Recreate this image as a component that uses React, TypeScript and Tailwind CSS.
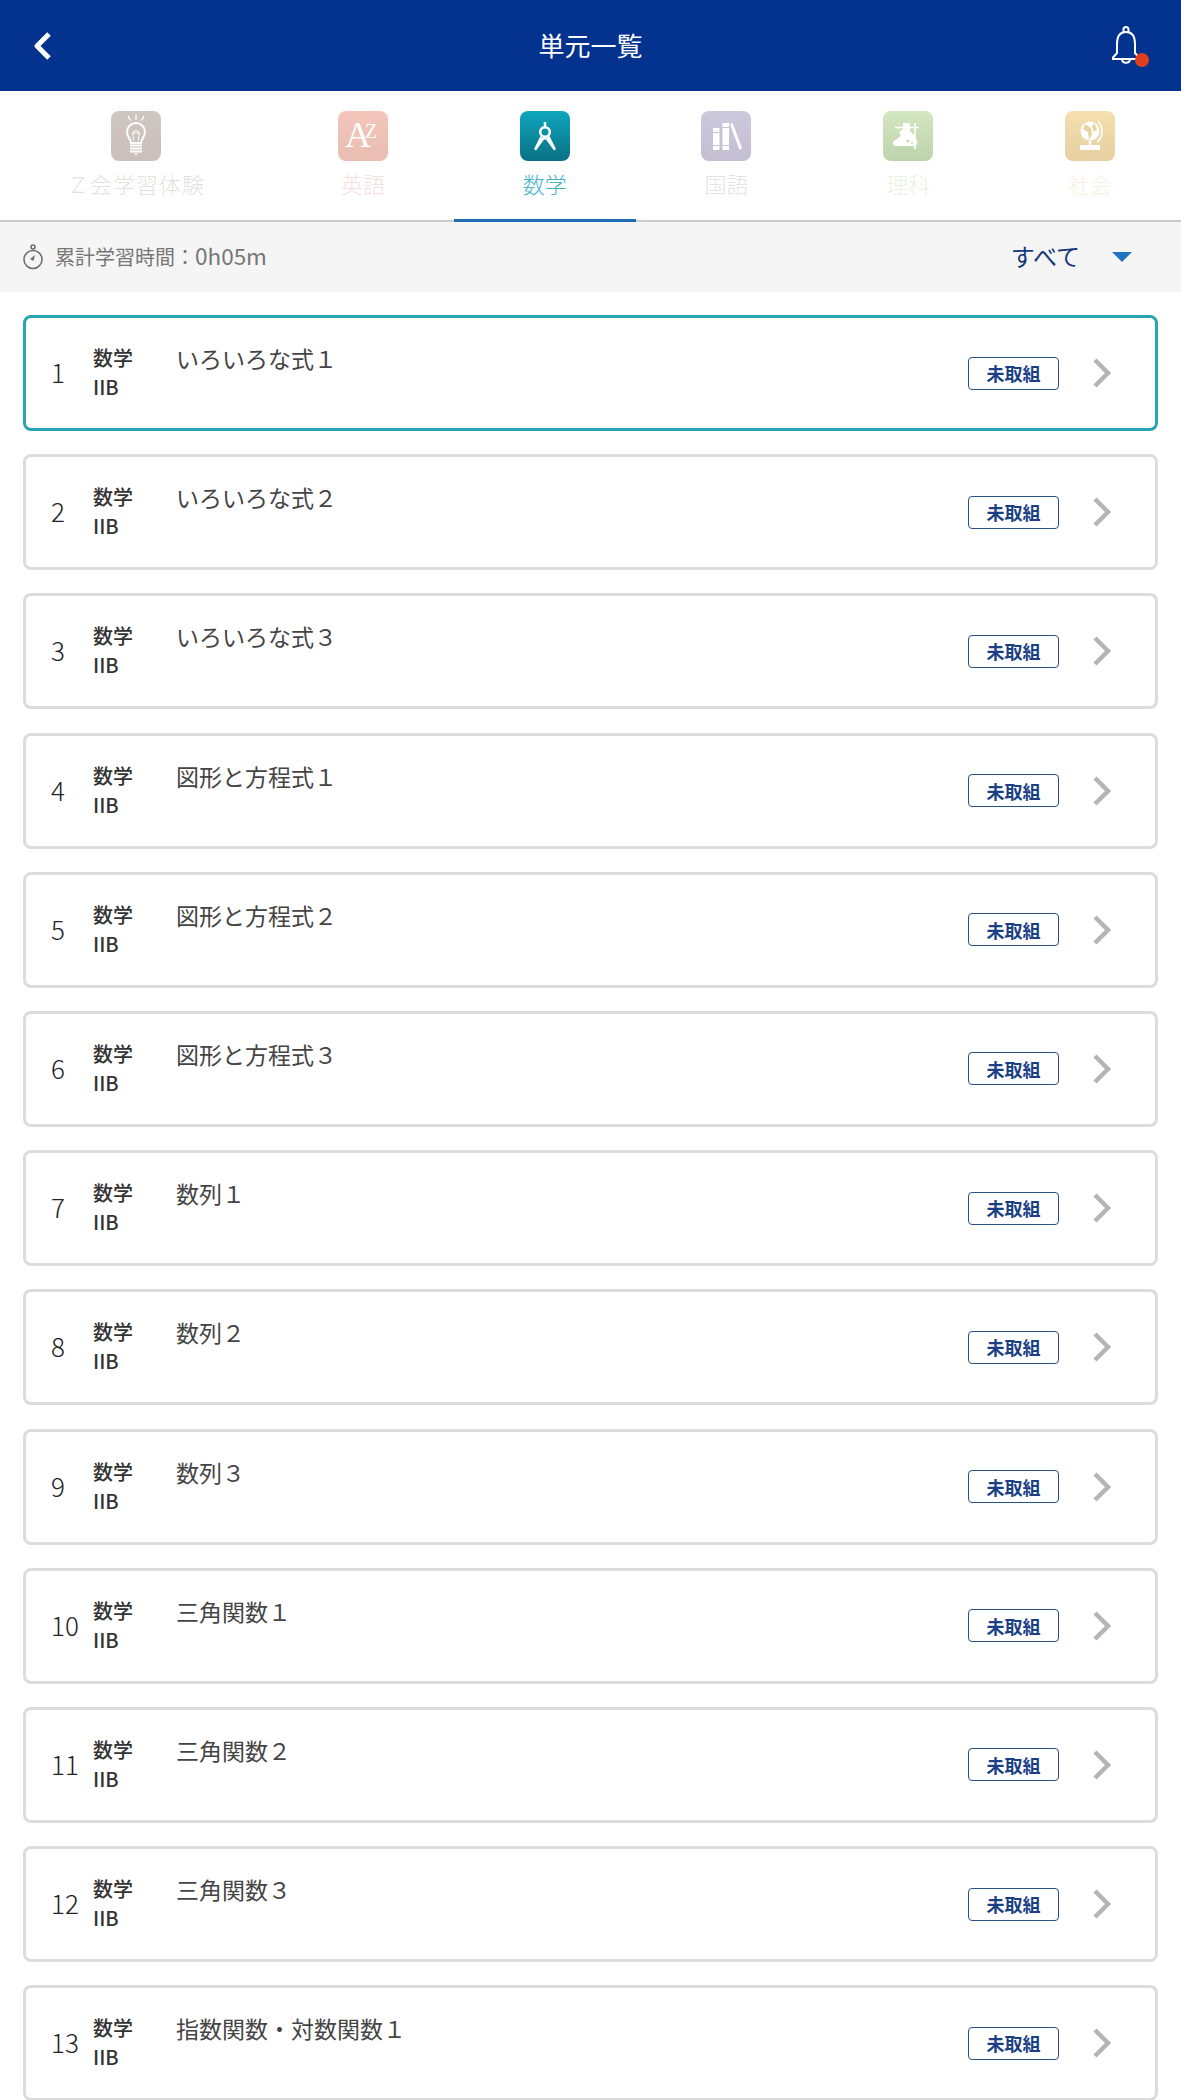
const BulbIcon = () => (
  <svg viewBox="0 0 50 50" className="h-[50px] w-[50px]" fill="none" stroke="#fff">
    <path d="M17 5l2.5 4.5M25 4v5M33 5l-2.5 4.5" strokeWidth="1.3" />
    <path d="M20 32c0-4-4-6-4-11a9 9 0 0 1 18 0c0 5-4 7-4 11z" strokeWidth="2" />
    <path d="M23 30l-1.5-8h7L27 30M21.5 22c1-3 6-3 7 0" strokeWidth="1" />
    <path d="M19 34.5h12M19 37.5h12M19 40.5h12" strokeWidth="2" />
    <path d="M23 42.5h4l-2 2z" fill="#fff" stroke="none" />
  </svg>
);

const AzIcon = () => (
  <svg viewBox="0 0 50 50" className="h-[50px] w-[50px]" fill="#fff">
    <text x="7" y="36" fontSize="36" fontFamily="'Liberation Serif', serif">
      A
      <tspan dx="-6" dy="-9" fontSize="20">
        Z
      </tspan>
    </text>
  </svg>
);

const CompassIcon = () => (
  <svg viewBox="0 0 50 50" className="h-[50px] w-[50px]">
    <path d="M25 11v5" stroke="#fff" strokeWidth="2.5" />
    <circle cx="25" cy="21" r="4.8" fill="none" stroke="#fff" strokeWidth="2.6" />
    <path d="M20.5 25L14 38l2 1.5 8-11h2l8 11 2-1.5-6.5-13-2 1.5h-5.500z" fill="#fff" />
  </svg>
);

const BooksIcon = () => (
  <svg viewBox="0 0 50 50" className="h-[50px] w-[50px]" fill="#fff">
    <path d="M12 17h6.500v22H12zM21.500 12H28v27h-6.500z" />
    <path d="M29 13l2.500-1L41 37l-2.500 2z" />
    <path d="M12 21h6.500v1H12zM12 34h6.500v1H12zM21.500 16H28v1h-6.500zM21.500 34H28v1h-6.500z" fill="#c6c2d5" />
  </svg>
);

const FlaskIcon = () => (
  <svg viewBox="0 0 50 50" className="h-[50px] w-[50px]">
    <path d="M32 12v26" stroke="#fff" strokeWidth="1.6" />
    <path d="M12 16.500h24" stroke="#fff" strokeWidth="1.6" />
    <path d="M20 12h7v8l5 5 2 5c1 3-1 5-3 5H13c-3 0-4-3-2-5l7-5-2-4 4-3z" fill="#fff" />
    <circle cx="25" cy="30" r="1.600" fill="#c6dcb3" />
    <circle cx="29" cy="32" r="1" fill="#c6dcb3" />
  </svg>
);

const GlobeIcon = () => (
  <svg viewBox="0 0 50 50" className="h-[50px] w-[50px]">
    <circle cx="25" cy="20" r="9.500" fill="#fff" />
    <path d="M20 13l6 4 1 6-3 6-1-8-5-3zM29 12l3 6-3 3-2-5z" fill="#e9d3a2" />
    <path d="M32 31c3-2 5-6 5-11s-2-8-4-10" fill="none" stroke="#fff" strokeWidth="1.600" />
    <path d="M25 30v4" stroke="#fff" strokeWidth="2.400" />
    <path d="M15 34h20v5H15z" fill="#fff" />
  </svg>
);

const tabs = [
  { label: "Ｚ会学習体験", icon: <BulbIcon />, box: "from-[#cfc5c1] to-[#cabfbb]", text: "text-[#e7dfdf] tracking-[1px]", first: true },
  { label: "英語", icon: <AzIcon />, box: "from-[#f4c6bb] to-[#e8bdb2]", text: "text-[#f3dfdb]" },
  { label: "数学", icon: <CompassIcon />, box: "from-[#0fa6bf] to-[#0a7184]", text: "text-[#45b4c8]", active: true },
  { label: "国語", icon: <BooksIcon />, box: "from-[#cdc9dd] to-[#c3bed2]", text: "text-[#e3e3e6]" },
  { label: "理科", icon: <FlaskIcon />, box: "from-[#d3e7c0] to-[#bcd3ab]", text: "text-[#e9f1df]" },
  { label: "社会", icon: <GlobeIcon />, box: "from-[#f5e0ae] to-[#e6cfa0]", text: "text-[#f8f1dc]" },
];

const units = [
  "いろいろな式１",
  "いろいろな式２",
  "いろいろな式３",
  "図形と方程式１",
  "図形と方程式２",
  "図形と方程式３",
  "数列１",
  "数列２",
  "数列３",
  "三角関数１",
  "三角関数２",
  "三角関数３",
  "指数関数・対数関数１",
];

const App = () => {
  return (
    <div className="h-[2100px] overflow-hidden bg-white font-['Noto_Sans_CJK_JP',sans-serif]">
      <header className="flex h-[91px] items-center bg-[#04328f] pl-[49px] pr-[40px] text-white">
        <div className="-ml-[17px] flex-1">
          <svg viewBox="0 0 20 30" className="h-[30px] w-[20px]" fill="none" stroke="#fff" strokeWidth="5" strokeLinejoin="round">
            <path d="M17 3L5 15l12 12" />
          </svg>
        </div>
        <h1 className="mb-[2px] ml-[8px] text-[26px] leading-none">単元一覧</h1>
        <div className="flex flex-1 justify-end">
          <div className="relative h-[40px] w-[30px]">
            <svg viewBox="0 0 30 40" className="h-[40px] w-[30px]" fill="none" stroke="#fff" strokeWidth="2">
              <path d="M12.500 6V3.500a2.500 2.500 0 0 1 5 0V6" />
              <path d="M15 6c-6.500 0-9 5-9 12v9l-4 4.500V33h26v-1.500L24 27v-9c0-7-2.500-12-9-12z" />
              <path d="M11 33c0 5 8 5 8 0" />
            </svg>
            <span className="absolute left-[24px] top-[27px] h-[14px] w-[14px] rounded-full bg-[#e2401c]" />
          </div>
        </div>
      </header>

      <nav className="flex h-[131px] border-b-2 border-[#cdcdcd]">
        {tabs.map((tab) => (
          <div
            key={tab.label}
            className={`relative flex flex-col items-center pt-[20px] ${tab.first ? "w-[272px]" : "flex-1"}`}
          >
            <div className={`h-[50px] w-[50px] rounded-[8px] bg-linear-to-b ${tab.box}`}>{tab.icon}</div>
            <span className={`mt-[8px] text-[22px] font-light leading-[28px] ${tab.text}`}>{tab.label}</span>
            {tab.active && <span className="absolute inset-x-0 -bottom-[2px] h-[3px] bg-[#1d6cb3]" />}
          </div>
        ))}
      </nav>

      <div className="flex h-[70px] items-center justify-between bg-[#f5f5f5] pl-[22px] pr-[49px]">
        <div className="flex items-center gap-[11px] text-[20px] leading-[28px] text-[#777]">
          <svg viewBox="0 0 22 28" className="h-[28px] w-[22px]" fill="none" stroke="#6f6f6f" strokeWidth="1.6">
            <circle cx="11" cy="16.500" r="9" />
            <circle cx="11" cy="4" r="2" />
            <path d="M8 16l5-4-1.500 6z" fill="#6f6f6f" stroke="none" />
          </svg>
          <span className="-mt-[3px]">累計学習時間：<span className="text-[22.5px]">0h05m</span></span>
        </div>
        <div className="flex items-center gap-[32px]">
          <span className="-mt-[3px] text-[24px] leading-[30px] text-[#153a7a]">すべて</span>
          <span className="h-0 w-0 border-x-[10px] border-t-[10px] border-x-transparent border-t-[#1e73be]" />
        </div>
      </div>

      <ul className="flex flex-col gap-[23.2px] px-[23px] pt-[23px]">
        {units.map((title, i) => (
          <li
            key={title}
            className={`flex h-[116px] items-center rounded-[8px] border-[3px] ${
              i === 0 ? "border-[#2aa3b3]" : "border-[#dcdcdc]"
            }`}
          >
            <span className="mb-[2px] ml-[25px] w-[42px] text-[26px] font-light leading-none text-[#222]">{i + 1}</span>
            <div className="-mt-[2px] flex w-[83px] flex-col text-[20px] leading-[29px] text-[#333]">
              <span className="font-medium">数学</span>
              <span className="font-medium">IIB</span>
            </div>
            <span className="mb-[30px] flex-1 text-[23px] leading-[30px] text-[#444]">{title}</span>
            <span className="mr-[33px] flex h-[33px] w-[91px] items-center justify-center rounded-[4px] border-[1.5px] border-[#2b4f80] text-[18px] font-bold leading-none text-[#1b3f85]">
              未取組
            </span>
            <svg viewBox="0 0 20 30" className="mr-[43px] h-[30px] w-[20px]" fill="none" stroke="#b5b5b5" strokeWidth="4.500">
              <path d="M3 2l13 13L3 28" />
            </svg>
          </li>
        ))}
      </ul>
    </div>
  );
};

export default App;
